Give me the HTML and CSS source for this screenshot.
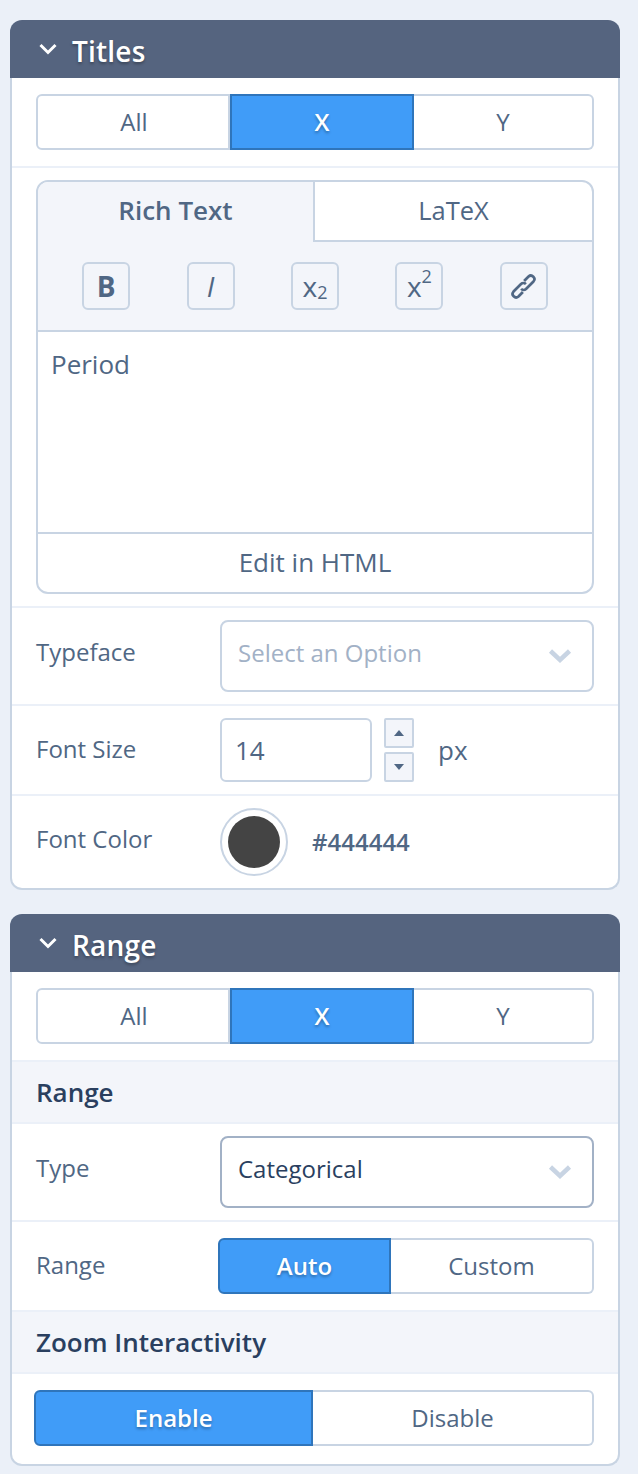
FILE: index.html
```html
<!DOCTYPE html>
<html lang="en">
<head>
<meta charset="utf-8">
<title>Panel</title>
<link rel="stylesheet" href="styles.css">
</head>
<body>
<section class="fold">
  <header class="fold-head">
    <svg class="caret" viewBox="0 0 18 12" width="18" height="12"><path d="M1.5 2 L9 9.5 L16.5 2" fill="none" stroke="#fff" stroke-width="3"/></svg>
    <span class="fold-title">Titles</span>
  </header>
  <div class="row row-toggle">
    <div class="toggle t-axis">
      <div class="opt">All</div><div class="opt on">X</div><div class="opt">Y</div>
    </div>
  </div>
  <div class="row row-editor">
    <div class="editor">
      <div class="tabs">
        <div class="tab tab-on">Rich Text</div>
        <div class="tab">LaTeX</div>
      </div>
      <div class="tools">
        <div class="tool tool-b">B</div>
        <div class="tool tool-i">I</div>
        <div class="tool tool-x">x<sub>2</sub></div>
        <div class="tool tool-x">x<sup>2</sup></div>
        <div class="tool">
          <svg viewBox="-0.500 -0.500 25 25" width="25" height="25" fill="none" stroke="#506784" stroke-width="2.700"><path d="M12.600 6.500 L17.030 2.030 A3.500 3.500 0 0 1 21.970 6.970 L14.470 14.470 A3.500 3.500 0 0 1 9.600 14.400"/><path d="M11.400 17.500 L6.970 21.970 A3.500 3.500 0 0 1 2.030 17.030 L9.530 9.530 A3.500 3.500 0 0 1 14.400 9.600"/></svg>
        </div>
      </div>
      <div class="text-area">Period</div>
      <div class="html-link">Edit in HTML</div>
    </div>
  </div>
  <div class="row row-field row-select">
    <label class="field-label lift">Typeface</label>
    <div class="select">
      <span class="placeholder">Select an Option</span>
      <svg class="sel-caret" viewBox="0 0 24 16" width="24" height="16"><path d="M2.500 3 L12 12 L21.500 3" fill="none" stroke="#c8d4e3" stroke-width="4.500"/></svg>
    </div>
  </div>
  <div class="row row-field row-size">
    <label class="field-label lift-sm">Font Size</label>
    <div class="num-input">14</div>
    <div class="spin">
      <div class="spin-btn"><svg viewBox="0 0 10 6" width="10" height="6"><path d="M0 6 L5 0 L10 6 Z" fill="#506784"/></svg></div>
      <div class="spin-btn"><svg viewBox="0 0 10 6" width="10" height="6"><path d="M0 0 L5 6 L10 0 Z" fill="#506784"/></svg></div>
    </div>
    <span class="unit">px</span>
  </div>
  <div class="row row-field row-color">
    <label class="field-label lift">Font Color</label>
    <div class="swatch"><div class="swatch-dot"></div></div>
    <span class="hex">#444444</span>
  </div>
</section>

<section class="fold">
  <header class="fold-head">
    <svg class="caret" viewBox="0 0 18 12" width="18" height="12"><path d="M1.5 2 L9 9.5 L16.5 2" fill="none" stroke="#fff" stroke-width="3"/></svg>
    <span class="fold-title">Range</span>
  </header>
  <div class="row row-toggle">
    <div class="toggle t-axis">
      <div class="opt">All</div><div class="opt on">X</div><div class="opt">Y</div>
    </div>
  </div>
  <div class="subhead">Range</div>
  <div class="row row-field row-type">
    <label class="field-label lift">Type</label>
    <div class="select select-filled">
      <span class="value">Categorical</span>
      <svg class="sel-caret" viewBox="0 0 24 16" width="24" height="16"><path d="M2.500 3 L12 12 L21.500 3" fill="none" stroke="#c8d4e3" stroke-width="4.500"/></svg>
    </div>
  </div>
  <div class="row row-field row-range">
    <label class="field-label lift-sm">Range</label>
    <div class="toggle t-range">
      <div class="opt on first">Auto</div><div class="opt">Custom</div>
    </div>
  </div>
  <div class="subhead">Zoom Interactivity</div>
  <div class="row row-zoom">
    <div class="toggle t-zoom">
      <div class="opt on first">Enable</div><div class="opt">Disable</div>
    </div>
  </div>
</section>
</body>
</html>
```

FILE: styles.css
```css
* { box-sizing: border-box; }
html, body { margin: 0; padding: 0; }
body {
  background: #ebf0f8;
  padding: 20px 18px 10px 10px;
  font-family: "Open Sans", "Noto Sans", sans-serif;
  font-size: 24px;
  color: #506784;
  width: 638px;
}
.fold {
  border: solid #c8d4e3;
  border-width: 0 2px 2px;
  border-radius: 12px;
  background: #fff;
  margin-bottom: 24px;
}
.fold:last-child { margin-bottom: 0; }
.fold-head {
  height: 58px;
  margin: 0 -2px;
  background: #55647f;
  border-radius: 12px 12px 0 0;
  display: flex;
  align-items: center;
  padding-left: 29px;
  color: #fff;
}
.caret { margin-right: 15px; }
.fold-title {
  font-size: 28px;
  font-weight: 600;
  letter-spacing: .2px;
  position: relative;
  top: 2px;
  text-shadow: 0 2px 3px rgba(0,0,0,.3);
}
.row { border-bottom: 2px solid #ebf0f8; }
.row:last-child { border-bottom: 0; }
.row-toggle { padding: 16px 24px; height: 90px; }
.row-editor { padding: 12px 24px; height: 440px; }
.row-zoom { padding: 16px 24px 16px 22px; height: 90px; }
.row-field { display: flex; align-items: center; padding: 0 24px; }
.row-select { height: 98px; padding-top: 2px; }
.row-size { height: 90px; }
.row-color { height: 92px; padding-bottom: 0; }
.row-type { height: 98px; }
.row-range { height: 90px; }
.toggle {
  display: flex;
  height: 56px;
  line-height: 52px;
  text-align: center;
}
.opt {
  flex: 1 1 0;
  border: 2px solid #c8d4e3;
  border-left-width: 0;
  background: #fff;
  min-width: 0;
}
.opt:first-child { border-left-width: 2px; border-radius: 6px 0 0 6px; }
.opt:last-child { border-radius: 0 6px 6px 0; }
.opt.on {
  background: #409cf8;
  border: 2px solid #2f75bb;
  color: #fff;
  font-weight: 600;
  text-shadow: 0 2px 3px rgba(0,0,0,.3);
}
.t-axis .opt:nth-child(1) { flex: 0 0 194px; padding-left: 2px; }
.t-axis .opt:nth-child(2) { flex: 0 0 184px; }
.t-axis .opt:nth-child(3) { flex: 1 1 0; }
.t-range { width: 376px; margin-left: -2px; }
.t-range .opt:nth-child(1) { flex: 0 0 173px; }
.t-zoom .opt:nth-child(1) { flex: 0 0 279px; }
.editor {
  border: 2px solid #c8d4e3;
  border-radius: 12px;
  height: 414px;
  overflow: hidden;
  display: flex;
  flex-direction: column;
}
.tabs { display: flex; height: 60px; flex: none; font-size: 25.5px; }
.tab {
  flex: 1 1 0;
  text-align: center;
  line-height: 56px;
  border-bottom: 2px solid #c8d4e3;
}
.tab-on {
  flex: 0 0 277px;
  background: #f3f5fa;
  border-bottom: 0;
  border-right: 2px solid #c8d4e3;
  font-weight: 600;
  font-size: 26px;
}
.tools {
  flex: none;
  height: 90px;
  background: #f3f5fa;
  border-bottom: 2px solid #c8d4e3;
  display: flex;
  gap: 56.4px;
  padding: 20px 0 0 44.2px;
}
.tool {
  width: 48px;
  height: 48px;
  border: 2px solid #c8d4e3;
  border-radius: 6px;
  display: flex;
  align-items: center;
  justify-content: center;
  font-size: 28px;
  line-height: 1;
}
.tool-b { font-weight: 700; }
.tool-i { font-style: italic; }
.tool sub, .tool sup { font-size: 18px; line-height: 0; }
.tool sub { position: relative; top: 6px; vertical-align: baseline; }
.tool sup { position: relative; top: -10px; vertical-align: baseline; }
.text-area {
  flex: none;
  height: 200px;
  padding: 14px 13px;
  font-size: 26px;
  line-height: 36px;
}
.html-link {
  flex: 1;
  border-top: 2px solid #c8d4e3;
  text-align: center;
  font-size: 26px;
  line-height: 56px;
}
.field-label { flex: 0 0 184px; }
.lift { position: relative; top: -3px; }
.lift-sm { position: relative; top: -2px; }
.row-select .lift { top: -6px; }
.row-color .lift { top: -4px; }
.row-type .lift { top: -5px; }
.select {
  flex: 0 0 374px;
  height: 72px;
  border: 2px solid #c8d4e3;
  border-radius: 8px;
  display: flex;
  align-items: center;
  justify-content: space-between;
  padding: 0 20px 0 16px;
}
.row-select .select { margin-top: -2px; }
.select-filled { border-color: #a2b1c6; }
.placeholder { color: #a2b1c6; position: relative; top: -4px; }
.value { color: #2a3f5f; position: relative; top: -4px; }
.num-input {
  width: 152px;
  height: 64px;
  border: 2px solid #c8d4e3;
  border-radius: 6px;
  line-height: 60px;
  padding-left: 13px;
  font-size: 26px;
}
.spin {
  margin-left: 12px;
  display: flex;
  flex-direction: column;
  gap: 4px;
}
.spin-btn {
  width: 30px;
  height: 30px;
  border: 2px solid #c8d4e3;
  border-radius: 2px;
  background: #f3f5fa;
  display: flex;
  align-items: center;
  justify-content: center;
}
.unit { margin-left: 24px; font-size: 26px; }
.swatch {
  width: 68px;
  height: 68px;
  border: 2px solid #c8d4e3;
  border-radius: 50%;
  display: flex;
  align-items: center;
  justify-content: center;
}
.swatch-dot {
  width: 52px;
  height: 52px;
  border-radius: 50%;
  background: #444444;
}
.hex { margin-left: 24px; font-weight: 600; position: relative; top: -1px; }
.subhead {
  height: 62px;
  background: #f3f5fa;
  border-bottom: 2px solid #ebf0f8;
  padding-left: 24px;
  line-height: 60px;
  font-size: 26px;
  font-weight: 600;
  color: #2a3f5f;
}
```
